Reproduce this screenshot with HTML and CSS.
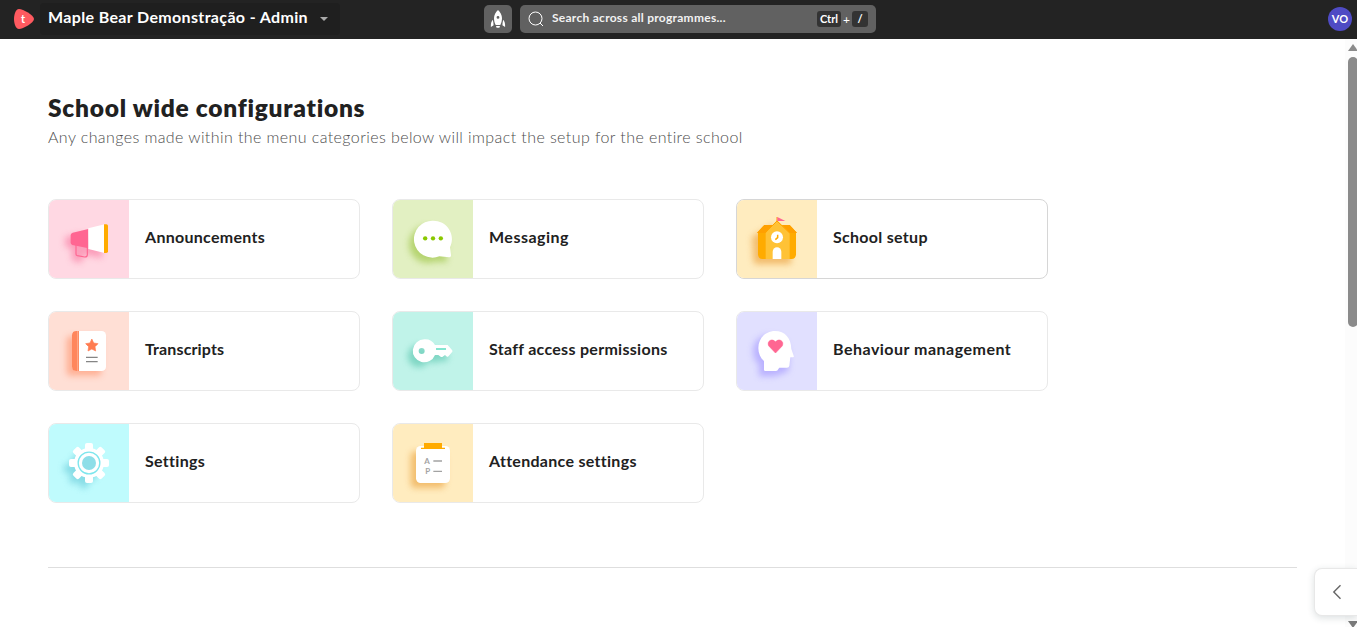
FILE: index.html
```html
<!DOCTYPE html>
<html lang="en">
<head>
<meta charset="utf-8">
<title>School wide configurations</title>
<link rel="stylesheet" href="styles.css">
</head>
<body>
<header class="topbar">
  <svg class="logo" viewBox="0 0 20 20"><path d="M5 0C9 0 20 6.200 20 10S9 20 5 20C1.500 20 0 14 0 10S1.500 0 5 0Z" fill="#ff5a60"/></svg>
  <span class="logo-letter">t</span>
  <button class="switcher"><span class="switcher-name">Maple Bear Demonstração - Admin</span><span class="caret"></span></button>
  <div class="tools">
    <button class="rocket" aria-label="Launch">
      <svg viewBox="0 0 28 28" width="28" height="28" fill="#fff"><path fill-rule="evenodd" d="M14 5c-2.400 2-4 5-4 8.300 0 2.500.7 5 1.700 6.700h4.600c1-1.700 1.700-4.200 1.700-6.700C18 10 16.400 7 14 5Zm0 6a1.400 1.400 0 1 1 0 2.800 1.400 1.400 0 0 1 0-2.800Z"/><path d="M8.800 14.800C7.200 16.500 6.700 19 6.900 22l2.700-1.800c0-1.900-.4-3.500-.8-5.400ZM19.200 14.800c1.600 1.700 2.100 4.200 1.900 7.200l-2.700-1.800c0-1.900.4-3.500.8-5.400ZM12 21h4l-.6 1.800h-2.800Z"/></svg>
    </button>
    <div class="search">
      <svg class="search-icon" viewBox="0 0 16 16" fill="none" stroke="#fff"><circle cx="7.500" cy="7.500" r="6.500"/><path d="m12 12 3 3"/></svg>
      <span class="search-text">Search across all programmes...</span>
      <kbd>Ctrl</kbd><span class="plus">+</span><kbd class="slash">/</kbd>
    </div>
  </div>
  <span class="avatar">VO</span>
</header>

<main class="page">
  <h1>School wide configurations</h1>
  <p class="lead">Any changes made within the menu categories below will impact the setup for the entire school</p>
  <section class="grid">
    <a class="card"><svg class="art pink" viewBox="27 30 240 234">
      <g class="shadow" fill="#fa86aa"><path d="m76 140 50-10 60 45v30l-50-10-15 25-26-10v-33l-20-8Z"/></g>
      <path d="M108 165v27q0 4 4 5l22 4q8 0 8-7v-20" fill="none" stroke="#ff6692" stroke-width="3.500"/>
      <path d="M145 117v58l-48-10q-5-2-5-8v-22q0-5 6-7Z" fill="#ff6692"/><path d="m145 115 49-12v86l-49-12Z" fill="#fff"/><path d="M192 103h7q5 0 5 5v76q0 5-5 5h-7Z" fill="#ffab00"/></svg><span>Announcements</span></a>
    <a class="card"><svg class="art green" viewBox="27 30 240 234">
      <path class="shadow" d="M132 107a56 56 0 1 0 20 108l38 1-5-32a56 56 0 0 0-53-77Z" fill="#a3c84f"/>
      <path d="M147 92a55.500 55.500 0 1 0 19 107l30 3q6 0 5-7l-3-23A55.500 55.500 0 0 0 147 92Z" fill="#fff"/><g fill="#8ac800"><circle cx="123.500" cy="145" r="6.500"/><circle cx="147" cy="145" r="6.500"/><circle cx="170.500" cy="145" r="6.500"/></g></svg><span class="wide">Messaging</span></a>
    <a class="card active"><svg class="art yellow" viewBox="27 30 240 234">
      <path class="shadow" d="m72 140 60-35 58 35v75q0 8-12 8H90q-14 0-14-14Z" fill="#eda84a"/>
      <path d="m109 105h76l22 23h-3v65q0 14-14 14h-86q-14 0-14-14v-65h-3Z" fill="#ffab00"/><path d="m87 129 22-24h76l22 24h-22l-16-15h-44l-16 15Z" fill="#ffa000"/>
      <path d="m147 91 38 38v78h-72v-78Z" fill="#ffc236"/><path d="m111 129 36-36 38 36" fill="none" stroke="#ffa300" stroke-width="3"/>
      <path d="M147 96V81" stroke="#ffa000" stroke-width="3"/><path d="m148 81 24 12h-24Z" fill="#ff6692"/><circle cx="147" cy="142" r="18" fill="#fff"/><path d="M149 134v9l-7 6" fill="none" stroke="#ffab00" stroke-width="4.500"/><path d="M134 207v-22a13 13 0 0 1 26 0v22Z" fill="#fff"/></svg><span>School setup</span></a>
    <a class="card"><svg class="art peach" viewBox="27 30 240 234">
      <rect class="shadow" x="80" y="103" width="104" height="118" rx="12" fill="#ff9c79"/>
      <rect x="96" y="87" width="102" height="120" rx="13" fill="#fff"/><path d="M117 87h-8q-13 0-13 13v94q0 13 13 13h8Z" fill="#ff865c"/><path d="M113 87v120" stroke="#ffab8d" stroke-width="3"/>
      <path d="m155.500 111 5.500 12 13 2-9 9 2 13-11.500-6-11.500 6 2-13-9-9 13-2Z" fill="#ff7c51" stroke="#ff7c51" stroke-width="2"/><path d="M138 166h35M138 179h35" stroke="#858585" stroke-width="4"/></svg><span class="narrow">Transcripts</span></a>
    <a class="card"><svg class="art mint" viewBox="27 30 240 234">
      <path class="shadow" d="M106 128a34 34 0 1 0 29 50h8l8 8 10-8h26l8-16-20-19h-40a34 34 0 0 0-29-15Z" fill="#65cbb5"/>
      <path fill-rule="evenodd" d="M121 112a34.500 34.500 0 1 0 32 47h10l8 6h4l8-6 6 5h3l13-15q1-3-1-5l-13-15h-38a34.500 34.500 0 0 0-32-17Zm-8 26a9 9 0 1 1 0 18 9 9 0 0 1 0-18Z" fill="#fff"/><path d="M156 138.500h30v5h-30Z" fill="#5bdcc0"/></svg><span>Staff access permissions</span></a>
    <a class="card"><svg class="art violet" viewBox="27 30 240 234">
      <path class="shadow" d="M125 100c-58 0-60 68-32 86v37h48l40-15 3-44c0-42-24-64-59-64Z" fill="#a99eff"/>
      <path d="M141 87c-28 0-50 22-50 51 0 16 6 30 17 39v26q0 4 4 4h32q5 0 7-6l3-4h23q6 0 7-6l3-25h8q4-1 2-5l-7-20C189 108 171 87 141 87Z" fill="#fff"/><path d="m142.500 153-20-21c-8-16 12-24 20-12 8-12 28-4 20 12Z" fill="#ff6692" stroke="#ff6692" stroke-width="2" stroke-linejoin="round"/></svg><span class="wide">Behaviour management</span></a>
    <a class="card"><svg class="art cyan" viewBox="27 30 240 234">
      <g class="shadow" fill="#70cfdc"><circle cx="131" cy="163" r="45"/><path d="M72 152h30v24H72Zm47 40h24v30h-24ZM84 196l18-18 16 16-18 18Z"/></g>
      <g fill="#fff"><circle cx="147" cy="147" r="45"/><rect x="135" y="87" width="24" height="120" rx="6"/><rect x="87" y="135" width="120" height="24" rx="6"/><rect x="135" y="87" width="24" height="120" rx="6" transform="rotate(45 147 147)"/><rect x="135" y="87" width="24" height="120" rx="6" transform="rotate(-45 147 147)"/></g>
      <circle cx="147" cy="147" r="32.500" fill="none" stroke="#7de6ed" stroke-width="4"/><circle cx="147" cy="147" r="21" fill="#8edee8"/></svg><span>Settings</span></a>
    <a class="card"><svg class="art yellow" viewBox="27 30 240 234">
      <rect class="shadow" x="80" y="112" width="104" height="110" rx="14" fill="#edaa4c"/>
      <rect x="96" y="96" width="102" height="111" rx="14" fill="#fff"/><path d="M120 87h54v14h9v4h-72v-4h9Z" fill="#ffab00"/><path d="M148 141h26M148 172h26" stroke="#a3a3a3" stroke-width="4"/><g class="marks"><text x="121" y="149">A</text><text x="124" y="180">P</text></g></svg><span>Attendance settings</span></a>
  </section>
  <hr>
</main>

<div class="scrollbar"><span class="arrow-up"></span><span class="thumb"></span><span class="arrow-down"></span></div>
<button class="drawer" aria-label="Open panel"><svg viewBox="0 0 10 16" fill="none" stroke="#666" stroke-width="1.400"><path d="M8.500 1.200 1.800 8l6.700 6.800"/></svg></button>
</body>
</html>
```
FILE: styles.css
```css
* { box-sizing: border-box; }
body { margin: 0; height: 627px; overflow: hidden; position: relative; background: #fff; color: #212121; font-family: Lato, "Open Sans", sans-serif; }
button { border: 0; padding: 0; font: inherit; color: inherit; }

.topbar { height: 39px; display: flex; align-items: center; padding: 0 5px 1px 14px; background: #232323; color: #fff; }
.logo { width: 20px; height: 20px; flex: none; }
.logo-letter { width: 20px; margin-left: -20px; padding-right: 2px; text-align: center; font-weight: 700; font-size: 11px; line-height: 18px; z-index: 1; }
.switcher { height: 32px; width: 300px; margin-left: 6px; padding: 0 12px 0 8px; display: flex; align-items: center; justify-content: space-between; background: #1f1f1f; border-radius: 4px; }
.switcher-name { font-size: 16px; font-weight: 700; letter-spacing: 0.350px; line-height: 20px; margin-top: -4px; white-space: nowrap; }
.caret { border: 4px solid transparent; border-top-color: #aaa; border-bottom: 0; }
.tools { display: flex; gap: 8px; margin-left: 144px; }
.rocket { width: 28px; height: 28px; background: #616161; border-radius: 5px; }
.rocket svg { display: block; }
.search { width: 356px; height: 28px; display: flex; align-items: center; background: #616161; border-radius: 5px; padding: 0 8px; font-size: 12px; }
.search-icon { width: 16px; height: 16px; }
.search-text { flex: 1; margin: -3px 0 0 8px; font-weight: 700; letter-spacing: 0.270px; color: #f2f2f2; }
kbd { height: 16px; width: 24px; text-align: center; background: #333; border-radius: 3px; font: 700 11px/16px Lato, sans-serif; }
.plus { width: 11px; text-align: center; }
.slash { width: 16px; }
.avatar { margin-left: auto; width: 24px; height: 24px; border-radius: 50%; background: #4f4bc4; font-size: 11px; line-height: 23px; text-align: center; font-weight: 700; }

.page { padding: 53px 60px 0 48px; }
h1 { margin: 0; font-size: 24.500px; line-height: 32px; font-weight: 800; letter-spacing: 0.740px; white-space: nowrap; }
.lead { margin: 1px 0 0; font-size: 16px; line-height: 24px; font-weight: 300; letter-spacing: 0.410px; color: #4d4d4d; white-space: nowrap; }
.grid { display: grid; grid-template-columns: repeat(3, 312px); grid-auto-rows: 80px; gap: 32px; margin-top: 50px; }
.card { display: flex; align-items: center; gap: 16px; border: 1px solid #e9e9e9; border-radius: 8px; overflow: hidden; font-size: 16px; font-weight: 700; letter-spacing: 0.290px; }
.card.active { border-color: #d6d6d6; }
.card span { margin-top: -5px; }
.card .wide { letter-spacing: 0.490px; }
.card .narrow { letter-spacing: 0.130px; }
.art { width: 80px; height: 78px; flex: none; }
.shadow { filter: blur(9px); opacity: 0.700; }
.pink { background: #ffd8e3; }
.green { background: #e2f0c2; }
.yellow { background: #ffecbf; }
.peach { background: #ffdfd5; }
.mint { background: #c0f3e9; }
.violet { background: #e1e0ff; }
.cyan { background: #bffbfd; }
.marks { fill: #a3a3a3; font: 700 24px Lato, sans-serif; }
hr { margin: 64px 0 0; border: 0; border-top: 1px solid #dedede; }

.scrollbar { position: absolute; top: 39px; right: 0; width: 12px; height: 588px; background: #fcfcfc; overflow: hidden; }
.scrollbar span { position: absolute; left: 3px; }
.arrow-up { top: 5px; border: 5px solid transparent; border-bottom: 7px solid #8b8b8b; border-top: 0; }
.thumb { top: 18px; width: 10px; height: 270px; border-radius: 5px; background: #8b8b8b; }
.arrow-down { top: 582px; border: 5px solid transparent; border-top: 7px solid #7b7b7b; border-bottom: 0; }
.drawer { position: absolute; left: 1314px; top: 568px; width: 43px; height: 48px; background: #fff; border: 1px solid #e8e8e8; border-right: 0; border-radius: 8px 0 0 8px; box-shadow: 0 2px 7px rgb(40 60 70 / 16%); display: flex; align-items: center; padding-left: 17px; }
.drawer svg { width: 10px; height: 16px; }
```
